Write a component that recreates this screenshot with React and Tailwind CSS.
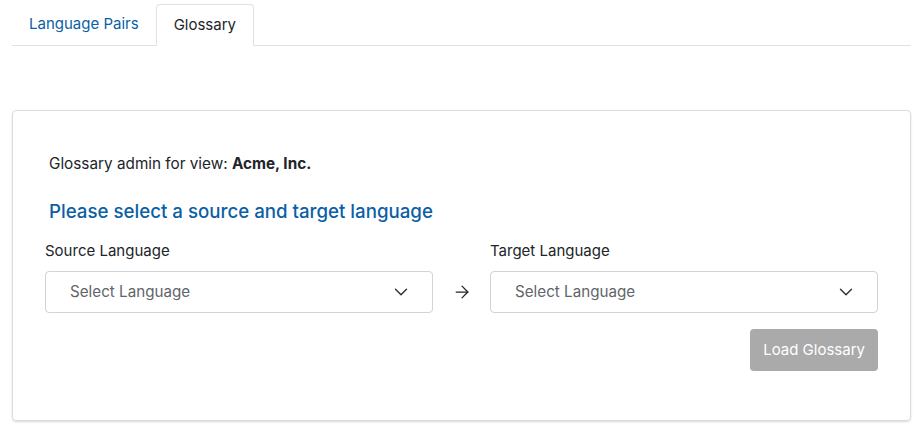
import { ChevronDown, ArrowRight } from "lucide-react";

function LanguageSelect({ label }) {
  return (
    <div className="flex-1 flex flex-col">
      <label className="text-[15px] text-[#212529] mb-[9px] leading-[22px]">{label}</label>
      <button className="h-[42px] w-full flex items-center justify-between rounded-[4px] border border-[#ced4da] bg-white pl-[24px] pr-[20px] text-[15.2px] text-[#5f656b]">
        <span>Select Language</span>
        <ChevronDown className="w-[22px] h-[22px] text-[#333]" strokeWidth={1.6} />
      </button>
    </div>
  );
}

export default function App() {
  return (
    <div className="min-h-screen bg-white px-[12px] pt-[4px] pr-[4px]" style={{ fontFamily: "Inter, 'Noto Sans', sans-serif" }}>
      {/* Tabs */}
      <div className="flex border-b border-[#dee2e6]">
        <button className="px-[17px] h-[41px] text-[15px] text-[#0b5fa5] mb-[-1px]">
          Language Pairs
        </button>
        <button className="px-[17px] h-[42px] text-[15px] text-[#212529] bg-white border border-[#dee2e6] border-b-white rounded-t-[4px] mb-[-1px]">
          Glossary
        </button>
      </div>

      {/* Card */}
      <div className="mt-[64px] border border-[#dcdcdc] rounded-[4px] shadow-[0_1px_2px_rgba(0,0,0,0.15)] px-[32px] pt-[41px] pb-[49px]">
        <p className="px-[4px] text-[15.3px] text-[#212529] leading-[24px]">
          Glossary admin for view: <span className="font-bold">Acme, Inc.</span>
        </p>
        <h2 className="px-[4px] mt-[23px] text-[18.7px] font-medium text-[#0b5fa5] leading-[26px]">
          Please select a source and target language
        </h2>
        <div className="mt-[15px] flex items-end">
          <LanguageSelect label="Source Language" />
          <div className="w-[57px] h-[42px] flex items-center justify-center">
            <ArrowRight className="w-[20px] h-[20px] text-[#222]" strokeWidth={1.5} />
          </div>
          <LanguageSelect label="Target Language" />
        </div>
        <div className="flex justify-end mt-[16px]">
          <button disabled className="h-[42px] px-[13px] rounded-[4px] bg-[#aaaaaa] text-white text-[15px]">
            Load Glossary
          </button>
        </div>
      </div>
    </div>
  );
}
